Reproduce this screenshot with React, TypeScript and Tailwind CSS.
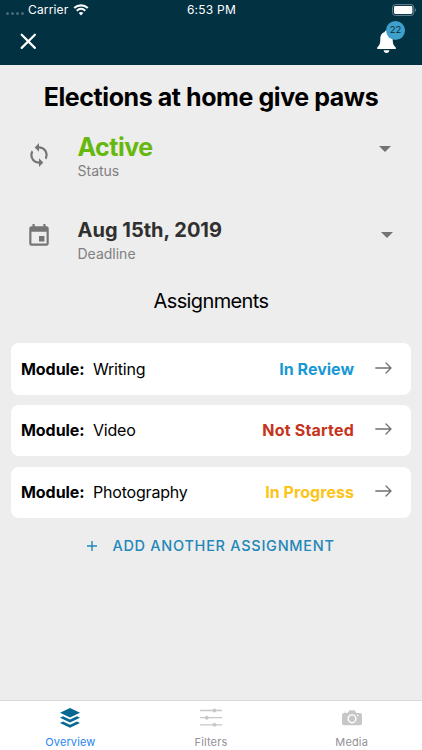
import type { ReactNode } from "react";
import { MdEvent, MdSync } from "react-icons/md";

interface Assignment {
  module: string;
  status: string;
  statusClass: string;
}

const assignments: Assignment[] = [
  { module: "Writing", status: "In Review", statusClass: "text-[#1a98d5]" },
  { module: "Video", status: "Not Started", statusClass: "text-[#c5341b] tracking-[0.2px]" },
  { module: "Photography", status: "In Progress", statusClass: "text-[#fbc417] tracking-[0.05px]" },
];

function StatusBar() {
  return (
    <div className="flex h-5 items-center justify-between pl-[6px] pr-[5px] text-white">
      <div className="flex flex-1 items-center">
        <div className="mt-[7px] flex gap-[2px]">
          {[0, 1, 2, 3].map((dot) => (
            <span key={dot} className="size-[3px] rounded-full bg-[#47697a]" />
          ))}
        </div>
        <span className="ml-[4px] text-[12px] leading-5 tracking-[0.15px]">Carrier</span>
        <svg className="ml-[5px]" width="16" height="12" viewBox="0 0 16 12" fill="none" stroke="white">
          <path d="M1.2 4.1C5.2.4 10.8.4 14.8 4.1" strokeWidth="2.1" />
          <path d="M3.7 6.7c2.6-2.3 6-2.3 8.6 0" strokeWidth="1.9" />
          <path d="M8 11.4 5.7 9c1.3-1.2 3.3-1.2 4.6 0z" fill="white" stroke="none" />
        </svg>
      </div>
      <span className="text-[12px] leading-5 tracking-[0.25px]">6:53 PM</span>
      <div className="flex flex-1 justify-end">
        <svg width="25" height="12" viewBox="0 0 25 12">
          <rect x="0.6" y="0.6" width="21.2" height="10.8" rx="2.8" fill="none" stroke="#6d8793" />
          <rect x="2" y="2" width="18.4" height="8" rx="1.4" fill="white" />
          <path d="M23 4.2c1.3.5 1.3 3.1 0 3.6z" fill="#6d8793" />
        </svg>
      </div>
    </div>
  );
}

function Header() {
  return (
    <header className="h-[65px] bg-[#023142]">
      <StatusBar />
      <div className="flex h-[45px] items-start justify-between pl-5 pr-[17px]">
        <svg className="mt-[13px]" width="17" height="17" viewBox="0 0 17 17" stroke="white" strokeWidth="2.2" strokeLinecap="round">
          <path d="m1.7 1.7 13.2 13.2M14.9 1.7 1.7 14.9" />
        </svg>
        <div className="relative h-[34px] w-[29px]">
          <svg className="mt-[9px]" width="21" height="25" viewBox="0 0 21 25" fill="white">
            <path d="M10.5 1.2c-1 0-1.7.8-1.7 1.8C5.5 3.8 4.3 6.7 4.3 10c0 5-1 6.3-2.6 7.9C.5 19 1.1 20 2.1 20h16.8c1 0 1.6-1 .4-2.1-1.6-1.6-2.6-2.9-2.6-7.9 0-3.3-1.2-6.2-4.5-7 0-1-.7-1.8-1.7-1.8z" />
            <path d="M7.6 21.2h5.8c-.2 1.7-1.4 2.8-2.9 2.8s-2.7-1.1-2.9-2.8z" />
          </svg>
          <span className="absolute left-[10px] top-[1px] flex size-[19px] items-center justify-center rounded-full bg-[#3fa0cb] text-[9.5px] text-[#052f40]">
            22
          </span>
        </div>
      </div>
    </header>
  );
}

interface DetailProps {
  icon: ReactNode;
  value: ReactNode;
  label: string;
  caretClass: string;
}

function Detail({ icon, value, label, caretClass }: DetailProps) {
  return (
    <div className="flex h-[52px] items-start pl-[26px]">
      <div className="w-[51.5px] text-[#757575]">{icon}</div>
      <div className="flex-1">
        {value}
        <p className="text-[14px] leading-[17px] text-[#808080]">{label}</p>
      </div>
      <svg className={caretClass} width="12" height="6" viewBox="0 0 12 6" fill="#737373">
        <path d="M0 0h12L6 6z" />
      </svg>
    </div>
  );
}

function AssignmentCard({ module, status, statusClass }: Assignment) {
  return (
    <button className="flex h-[51.5px] w-full items-center rounded-[8px] bg-white pb-[0.5px] pl-[10.5px] pr-[19px] text-left text-[16px] leading-5">
      <span className="w-[72px] font-bold tracking-[-0.05px] whitespace-nowrap">Module:</span>
      <span className="flex-1 tracking-[-0.2px]">{module}</span>
      <span className={`font-bold ${statusClass}`}>{status}</span>
      <svg className="ml-[21px] -mt-[2px]" width="17" height="12" viewBox="0 0 17 12" fill="none" stroke="#707070" strokeWidth="1.3" strokeLinecap="round" strokeLinejoin="round">
        <path d="M.8 6h15M11 1l5 5-5 5" />
      </svg>
    </button>
  );
}

function TabBar() {
  return (
    <nav className="grid h-[50px] grid-cols-3 border-t border-[#d8d8d8] bg-white text-[11px] text-[#929297]">
      <div className="flex flex-col items-center pt-[7px] text-[#2585f0]">
        <svg width="20" height="20" viewBox="0 0 20 20" fill="#076891">
          <path d="M10 0 0 4.7l10 4.7 10-4.7z" />
          <path d="m0 9.7 3-1.4 7 3.2 7-3.2 3 1.4-10 4.8z" />
          <path d="m0 15 3-1.4 7 3.2 7-3.2 3 1.4-10 4.8z" />
        </svg>
        <span className="mt-[5.5px] leading-4 tracking-[0.1px]">Overview</span>
      </div>
      <div className="flex flex-col items-center pt-[7px]">
        <svg width="22" height="20" viewBox="0 0 22 20" fill="#c7c7c7" stroke="#c7c7c7">
          <path d="M0 2.5h22M0 9.7h22M0 16.8h22" strokeWidth="1.3" />
          <circle cx="14.5" cy="2.5" r="1.5" />
          <circle cx="6.8" cy="9.7" r="1.5" />
          <circle cx="14.5" cy="16.8" r="1.5" />
        </svg>
        <span className="mt-[5.5px] leading-4 tracking-[0.15px]">Filters</span>
      </div>
      <div className="flex flex-col items-center pt-[7px]">
        <svg width="20" height="20" viewBox="0 0 20 20" fill="#c7c7c7">
          <path d="M2 5h3.4l1.8-2.2c.4-.5.8-.6 1.3-.6h3c.5 0 .9.1 1.3.6L14.6 5H18c1.2 0 2 .8 2 2v8.2c0 1.2-.8 2-2 2H2c-1.2 0-2-.8-2-2V7c0-1.200.8-2 2-2z" />
          <path d="M2.4 4.4v-.6h1.9v.6z" />
          <circle cx="10" cy="10.8" r="3.9" fill="none" stroke="white" strokeWidth="1.4" />
          <circle cx="15.8" cy="7.4" r=".8" fill="white" />
        </svg>
        <span className="mt-[5.5px] leading-4 tracking-[0.15px]">Media</span>
      </div>
    </nav>
  );
}

export default function App() {
  return (
    <div className="flex h-[750px] w-[422px] flex-col overflow-hidden bg-[#ededed] font-['Inter','Liberation_Sans',sans-serif] text-black">
      <Header />
      <main className="flex-1 pt-4">
        <h1 className="text-center text-[25px] leading-8 font-bold tracking-[-0.43px]">Elections at home give paws</h1>

        <div className="mt-[19px] flex flex-col gap-[31px]">
          <Detail
            icon={<MdSync className="mt-[10px]" size={26} />}
            value={<p className="text-[25px] leading-[30px] font-bold tracking-[-0.5px] text-[#66b80e]">Active</p>}
            label="Status"
            caretClass="mt-[14px] mr-[31px]"
          />
          <Detail
            icon={<MdEvent className="mt-[8px]" size={26} />}
            value={<p className="text-[20px] leading-[30px] font-bold text-[#303030]">Aug 15th, 2019</p>}
            label="Deadline"
            caretClass="mt-[17px] mr-[29px]"
          />
        </div>

        <h2 className="mt-[22px] text-center text-[20px] leading-6 tracking-[-0.62px]">Assignments</h2>

        <div className="mt-[30px] flex flex-col gap-[10.25px] pl-[10.5px] pr-[11px]">
          {assignments.map((item) => (
            <AssignmentCard key={item.module} {...item} />
          ))}
        </div>

        <button className="mx-auto mt-[18px] flex items-center text-[14.5px] leading-5 font-medium tracking-[0.72px] text-[#2487b8]">
          <svg className="mr-[15px]" width="10" height="10" viewBox="0 0 10 10" stroke="currentColor" strokeWidth="1.4">
            <path d="M5 0v10M0 5h10" />
          </svg>
          ADD ANOTHER ASSIGNMENT
        </button>
      </main>
      <TabBar />
    </div>
  );
}
